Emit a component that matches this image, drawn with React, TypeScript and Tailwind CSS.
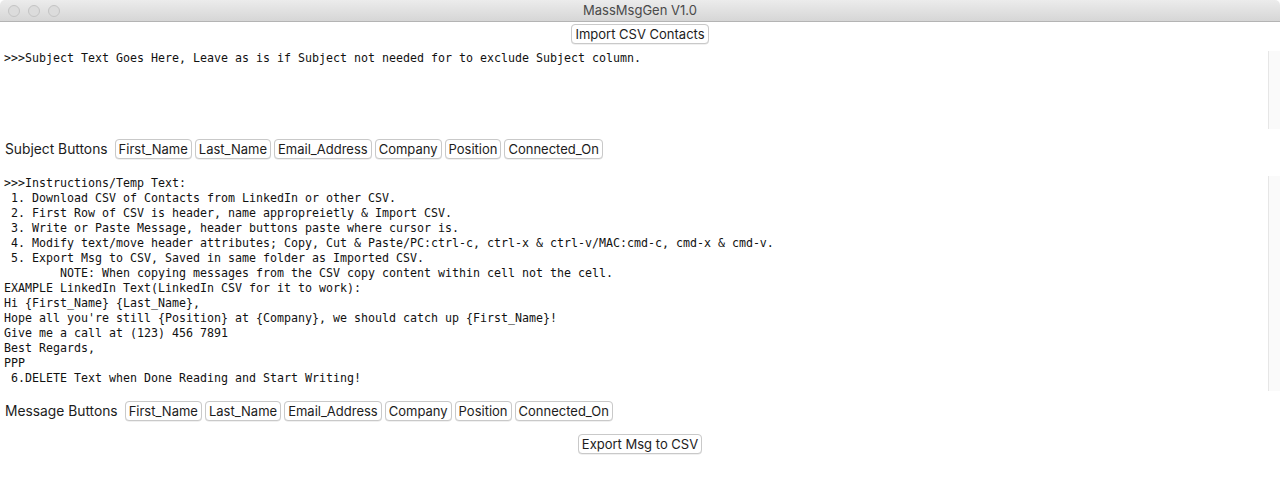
import * as React from "react";

const headers = [
  "First_Name",
  "Last_Name",
  "Email_Address",
  "Company",
  "Position",
  "Connected_On",
];

const messageLines = [
  ">>>Instructions/Temp Text:",
  " 1. Download CSV of Contacts from LinkedIn or other CSV.",
  " 2. First Row of CSV is header, name appropreietly & Import CSV.",
  " 3. Write or Paste Message, header buttons paste where cursor is.",
  " 4. Modify text/move header attributes; Copy, Cut & Paste/PC:ctrl-c, ctrl-x & ctrl-v/MAC:cmd-c, cmd-x & cmd-v.",
  " 5. Export Msg to CSV, Saved in same folder as Imported CSV.",
  "        NOTE: When copying messages from the CSV copy content within cell not the cell.",
  "EXAMPLE LinkedIn Text(LinkedIn CSV for it to work):",
  "Hi {First_Name} {Last_Name},",
  "Hope all you're still {Position} at {Company}, we should catch up {First_Name}!",
  "Give me a call at (123) 456 7891",
  "Best Regards,",
  "PPP",
  " 6.DELETE Text when Done Reading and Start Writing!",
];

function MacButton({ children }: { children: React.ReactNode }) {
  return (
    <button
      type="button"
      className="h-[20px] rounded-[4px] border border-[#c9c9c9] bg-white px-[3px] text-[13px] leading-[18px] text-[#1c1c1c] shadow-[0_0.5px_0.5px_rgba(0,0,0,0.12)] font-['Inter','Liberation_Sans',sans-serif]"
    >
      {children}
    </button>
  );
}

function TextPane({
  lines,
  className,
}: {
  lines: string[];
  className: string;
}) {
  return (
    <div className={"flex w-full bg-white " + className}>
      <div className="min-w-0 flex-1 overflow-hidden pl-[4px] whitespace-pre font-['DejaVu_Sans_Mono',monospace] text-[11.64px] leading-[15px] text-[#111]">
        {lines.map((line, i) => (
          <div key={i}>{line}</div>
        ))}
      </div>
      <div className="w-[12px] shrink-0 border-l border-[#e6e6e6] bg-[#fafafa]" />
    </div>
  );
}

function ButtonRow({ label }: { label: string }) {
  return (
    <div className="flex h-[20px] items-center gap-[7px] pl-[5px]">
      <span className="text-[13.8px] leading-[20px] text-[#1c1c1c] font-['Inter','Liberation_Sans',sans-serif]">
        {label}
      </span>
      <div className="flex gap-[3px]">
        {headers.map((h) => (
          <MacButton key={h}>{h}</MacButton>
        ))}
      </div>
    </div>
  );
}

export default function App() {
  return (
    <div className="flex h-[501px] w-[1280px] flex-col overflow-hidden bg-white">
      <div className="relative flex h-[22px] shrink-0 items-center justify-center rounded-t-[5px] border-b border-[#b4b4b4] bg-gradient-to-b from-[#ececec] to-[#d6d6d6]">
        <div className="absolute left-[8px] top-[5px] flex gap-[8px]">
          <span className="size-[12px] rounded-full border border-[#c4c4c4] bg-[#dcdcdc]" />
          <span className="size-[12px] rounded-full border border-[#c4c4c4] bg-[#dcdcdc]" />
          <span className="size-[12px] rounded-full border border-[#c4c4c4] bg-[#dcdcdc]" />
        </div>
        <span className="text-[13px] text-[#4a4a4a] font-['Inter','Liberation_Sans',sans-serif]">
          MassMsgGen V1.0
        </span>
      </div>

      <div className="flex justify-center pt-[2px]">
        <MacButton>Import CSV Contacts</MacButton>
      </div>

      <TextPane
        className="mt-[1px] h-[84px] pt-[6px]"
        lines={[
          ">>>Subject Text Goes Here, Leave as is if Subject not needed for to exclude Subject column.",
        ]}
      />

      <div className="mt-[10px]">
        <ButtonRow label="Subject Buttons" />
      </div>

      <TextPane className="mt-[13px] h-[219px] pt-[4px]" lines={messageLines} />

      <div className="mt-[10px]">
        <ButtonRow label="Message Buttons" />
      </div>

      <div className="mt-[13px] flex justify-center">
        <MacButton>Export Msg to CSV</MacButton>
      </div>
    </div>
  );
}
